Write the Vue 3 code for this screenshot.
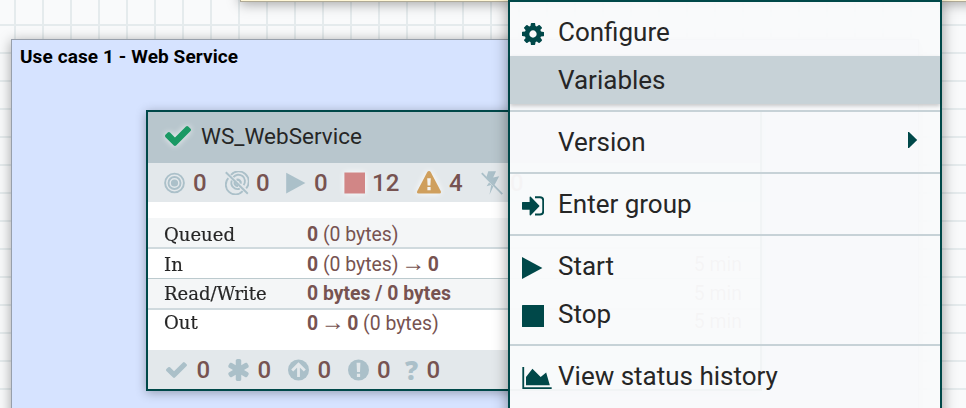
<script setup>
const activity = [
  { icon: 'transmitting', value: '0', width: 61 },
  { icon: 'muted', value: '0', width: 60 },
  { icon: 'running', value: '0', width: 59 },
  { icon: 'stopped', value: '12', width: 73 },
  { icon: 'invalid', value: '4', width: 64 },
  { icon: 'disabled', value: '0', width: 60 },
]

const stats = [
  { label: 'Queued', parts: [['0', true], [' (0 bytes)', false]], window: '' },
  { label: 'In', parts: [['0', true], [' (0 bytes)', false], ['→', false], ['0', true]], window: '5 min' },
  { label: 'Read/Write', parts: [['0 bytes / 0 bytes', true]], window: '5 min' },
  { label: 'Out', parts: [['0', true], ['→', false], ['0', true], [' (0 bytes)', false]], window: '5 min' },
]

const versions = [
  { icon: 'check', value: '0', width: 62 },
  { icon: 'asterisk', value: '0', width: 60 },
  { icon: 'up', value: '0', width: 59.5 },
  { icon: 'alert', value: '0', width: 57.5 },
  { icon: 'question', value: '0', width: 50 },
]

const menu = [
  [{ icon: 'cog', label: 'Configure' }, { label: 'Variables', active: true }],
  [{ label: 'Version', submenu: true }],
  [{ icon: 'enter', label: 'Enter group' }],
  [{ icon: 'start', label: 'Start' }, { icon: 'stop', label: 'Stop' }],
  [{ icon: 'chart', label: 'View status history' }],
]

const checkPath = 'M1671 566q0 40-28 68l-724 724-136 136q-28 28-68 28t-68-28l-136-136-362-362q-28-28-28-68t28-68l136-136q28-28 68-28t68 28l294 295 656-657q28-28 68-28t68 28l136 136q28 28 28 68z'
const asteriskPath = 'M1546 1050q46 26 59.5 77.5t-12.5 97.5l-64 110q-26 46-77.5 59.5t-97.5-12.5l-266-153v307q0 52-38 90t-90 38h-128q-52 0-90-38t-38-90v-307l-266 153q-46 26-97.5 12.5t-77.5-59.5l-64-110q-26-46-12.5-97.5t59.5-77.5l266-154-266-154q-46-26-59.5-77.5t12.5-97.5l64-110q26-46 77.5-59.5t97.5 12.5l266 153v-307q0-52 38-90t90-38h128q52 0 90 38t38 90v307l266-153q46-26 97.5-12.5t77.5 59.5l64 110q26 46 12.5 97.5t-59.5 77.5l-266 154z'
const cogPath = 'M1152 896q0-106-75-181t-181-75-181 75-75 181 75 181 181 75 181-75 75-181zm512-109v222q0 12-8 23t-20 13l-185 28q-19 54-39 91 35 50 107 138 10 12 10 25t-9 23q-27 37-99 108t-94 71q-12 0-26-9l-138-108q-44 23-91 38-16 136-29 186-7 28-36 28h-222q-14 0-24.5-8.5t-11.5-21.5l-28-184q-49-16-90-37l-141 107q-10 9-25 9-14 0-25-11-126-114-165-168-7-10-7-23 0-12 8-23 15-21 51-66.5t54-70.5q-27-50-41-99l-183-27q-13-2-21-12.5t-8-23.5v-222q0-12 8-23t19-13l186-28q14-46 39-92-40-57-107-138-10-12-10-24 0-10 9-23 26-36 98.5-107.5t94.5-71.5q13 0 26 10l138 107q44-23 91-38 16-136 29-186 7-28 36-28h222q14 0 24.5 8.5t11.5 21.5l28 184q49 16 90 37l142-107q9-9 24-9 13 0 25 10 129 119 165 170 7 8 7 22 0 12-8 23-15 21-51 66.5t-54 70.5q26 50 41 98l183 28q13 2 21 12.5t8 23.5z'
</script>

<template>
  <div class="canvas">
    <div class="note"></div>

    <section class="label">
      <h2>Use case 1 - Web Service</h2>
    </section>

    <article class="group">
      <header class="title">
        <svg class="ok" width="26" height="20" viewBox="121 334 1550 1188" preserveAspectRatio="none"><path :d="checkPath" /></svg>
        <span>WS_WebService</span>
      </header>

      <div class="bar">
        <div v-for="(a, i) in activity" :key="i" class="cell" :style="{ width: a.width + 'px' }">
          <svg v-if="a.icon === 'transmitting'" class="ico" width="22" height="24" viewBox="0 0 22 24">
            <g fill="none" stroke="#abc0c9" stroke-width="1.9">
              <circle cx="10.5" cy="12" r="9.4" /><circle cx="10.5" cy="12" r="6" />
            </g>
            <circle cx="10.5" cy="12" r="3.6" fill="#abc0c9" />
          </svg>
          <svg v-else-if="a.icon === 'muted'" class="ico" width="24" height="24" viewBox="0 0 24 24">
            <g fill="none" stroke="#abc0c9" stroke-width="1.9">
              <path d="M6 3.8A9.6 9.6 0 0 1 21.2 17.3M3.3 7.2A9.6 9.6 0 0 0 17.7 20.2" />
              <path d="M8.4 6.2A6.2 6.2 0 0 1 18.6 14.1M6.8 9.500A6.2 6.2 0 0 0 14.8 17.6" />
              <path d="M11.6 8.900A3.200 3.200 0 0 1 15.7 12.6M9.700 10.900A3.200 3.200 0 0 0 13 14.900" stroke-width="2.200" />
              <path d="M.8 1.3L22.8 22.8" />
            </g>
          </svg>
          <svg v-else-if="a.icon === 'running'" class="ico" width="22" height="24" viewBox="0 0 22 24"><path d="M1.2 1.7L20.400 12 1.2 22.5z" fill="#abc0c9" /></svg>
          <svg v-else-if="a.icon === 'stopped'" class="ico glow" width="21" height="24" viewBox="0 0 21 24"><path d="M.4 1.4h21v21.2h-21z" fill="#d18686" /></svg>
          <svg v-else-if="a.icon === 'invalid'" class="ico glow" width="25" height="24" viewBox="0 0 25 24">
            <path d="M12 0q1.1 0 1.7 1l10 19q.9 2.2-1.2 2.5H1.5Q-.7 22.2.3 20l10-19Q10.900 0 12 0z" fill="#cf9f5d" />
            <path d="M10.200 7.200h3.600l-.4 7.400h-2.800zM10.400 16h3.200v3.200h-3.200z" fill="#f4f4f2" />
          </svg>
          <svg v-else class="ico" width="22" height="24" viewBox="0 0 22 24">
            <path d="M7.300.3h7.700l-2.800 6.100 6-1.200-4.700 8.700-8.100-7.700zM8 11.500l4.300 4.100-3.800 8.200 1.700-9.700-4.600 1.100z" fill="#abc0c9" />
            <path d="M.8 2.200L21.300 23.100" stroke="#abc0c9" stroke-width="1.8" />
          </svg>
          <span>{{ a.value }}</span>
        </div>
      </div>

      <dl class="stats">
        <div v-for="s in stats" :key="s.label" class="row">
          <dt><span>{{ s.label }}</span></dt>
          <dd><template v-for="(p, i) in s.parts" :key="i"><span :class="{ strong: p[1], arrow: p[0] === '→' }">{{ p[0] }}</span></template></dd>
          <dd class="window">{{ s.window }}</dd>
        </div>
      </dl>

      <div class="bar foot">
        <div v-for="(v, i) in versions" :key="i" class="cell" :style="{ width: v.width + 'px' }">
          <svg v-if="v.icon === 'check'" class="ico" width="22" height="22" viewBox="0 0 22 22"><svg x="0" y="3" width="21" height="16" viewBox="121 334 1550 1188" preserveAspectRatio="none"><path :d="checkPath" fill="#abc0c9" /></svg></svg>
          <svg v-else-if="v.icon === 'asterisk'" class="ico" width="21" height="22" viewBox="172 128 1448 1536"><path :d="asteriskPath" fill="#abc0c9" /></svg>
          <svg v-else-if="v.icon === 'up'" class="ico" width="21" height="22" viewBox="0 0 21 22">
            <circle cx="10.500" cy="11" r="10.500" fill="#abc0c9" />
            <path d="M4.200 11.500L10.500 5.200 16.800 11.500M10.500 6v12" fill="none" stroke="#e3e8eb" stroke-width="2.800" />
          </svg>
          <svg v-else-if="v.icon === 'alert'" class="ico" width="21" height="22" viewBox="0 0 21 22">
            <circle cx="10.500" cy="11" r="10.500" fill="#abc0c9" />
            <path d="M8.600 3.800h3.800L12 13H9zM8.900 14.700h3.200v3.200H8.900z" fill="#e3e8eb" />
          </svg>
          <b v-else class="question">?</b>
          <span>{{ v.value }}</span>
        </div>
      </div>
    </article>

    <nav class="menu">
      <ul v-for="(section, n) in menu" :key="n">
        <li v-for="item in section" :key="item.label" :class="{ active: item.active }">
          <i class="slot">
            <svg v-if="item.icon === 'cog'" width="22" height="22" viewBox="128 128 1536 1536"><path :d="cogPath" /></svg>
            <svg v-else-if="item.icon === 'enter'" width="22" height="22" viewBox="0 0 22 22">
              <path d="M0 7.500q0-.6.600-.6H7.600V2.300q.2-1.300 1.200-.5L17.200 10.600q.5.500 0 1L8.800 20.200q-1 .8-1.200-.5V14.700H.600q-.6 0-.6-.6z" />
              <path d="M13 2.200h5q3.200 0 3.200 3.300v10.700q0 3.300-3.200 3.300H13" fill="none" stroke="#004849" stroke-width="1.900" />
            </svg>
            <svg v-else-if="item.icon === 'start'" width="22" height="22" viewBox="0 0 22 22"><path d="M0 0L20.400 11 0 22z" /></svg>
            <svg v-else-if="item.icon === 'stop'" width="22" height="22" viewBox="0 0 22 22"><rect width="22.200" height="22" rx=".6" /></svg>
            <svg v-else-if="item.icon === 'chart'" width="30" height="22" viewBox="0 128 2048 1536"><path d="M2048 1536v128h-2048v-1536h128v1408h1920zm-384-1024l256 896h-1664v-576l448-576 576 576z" /></svg>
          </i>
          <span>{{ item.label }}</span>
          <svg v-if="item.submenu" class="caret" width="10" height="16" viewBox="0 0 10 16"><path d="M0 0H1L9.200 8 1 16H0z" /></svg>
        </li>
      </ul>
    </nav>
  </div>
</template>

<style>
body {
  margin: 0;
}
</style>

<style scoped>
.canvas {
  position: relative;
  width: 966px;
  height: 408px;
  overflow: hidden;
  font-family: Roboto, "Liberation Sans", sans-serif;
  background-color: #f9fafb;
  background-image:
    linear-gradient(90deg, #e5ebed 2px, transparent 2px),
    linear-gradient(#e5ebed 2px, transparent 2px);
  background-size: 28px 28px;
  background-position: 14px 0, 0 24px;
}
.note {
  position: absolute;
  left: 240px;
  top: -60px;
  width: 800px;
  height: 60px;
  background: #fff7d7;
  border: 1px solid #b0aa96;
  box-shadow: 0 2px 12px rgba(0, 0, 0, 0.35);
}
.label {
  position: absolute;
  left: 11px;
  top: 39px;
  width: 908px;
  height: 420px;
  box-sizing: border-box;
  background: #d6e3ff;
  border: 1px solid #979fab;
  box-shadow: 0 2px 12px rgba(0, 0, 0, 0.35);
}
.label h2 {
  margin: 0;
  padding: 5px 8px;
  font-size: 19px;
  letter-spacing: 0.1px;
  line-height: 24px;
  font-weight: 700;
  color: #000;
}
.group {
  position: absolute;
  left: 146px;
  top: 110px;
  width: 616px;
  height: 281px;
  box-sizing: border-box;
  border: 2px solid #004849;
  background: #fff;
  box-shadow: 0 2px 10px rgba(0, 0, 0, 0.3);
}
.title {
  display: flex;
  align-items: center;
  height: 51px;
  padding: 0 0 3px 17px;
  box-sizing: border-box;
  background: #b8c6cd;
  font-size: 22.5px;
  color: #262626;
}
.title span {
  margin-left: 10px;
  line-height: 28px;
}
.ok {
  fill: #1a9964;
  filter: drop-shadow(0 0 3px rgba(255, 255, 255, 0.8));
}
.bar {
  display: flex;
  align-items: center;
  height: 39px;
  padding-left: 16px;
  background: #e3e8eb;
  color: #775351;
  font-size: 24px;
  font-weight: 500;
}
.foot {
  padding-left: 18px;
}
.cell {
  display: flex;
  flex: none;
  align-items: center;
  gap: 7px;
  white-space: nowrap;
}
.foot .cell {
  gap: 8.5px;
}
.ico {
  flex: none;
}
.glow {
  filter: drop-shadow(0 0 3px #fff);
}
.stats {
  margin: 0;
  padding: 16px 0;
  height: 116px;
}
.row {
  display: flex;
  height: 31px;
  box-sizing: border-box;
  padding-left: 16px;
  border-bottom: 2px solid #d0dade;
  line-height: 32px;
  font-size: 19.4px;
}
.row:nth-child(odd) {
  background: #f4f6f7;
}
.row:first-child dd {
  line-height: 34px;
}
.row:nth-child(2) {
  height: 30px;
  border-bottom: 1px solid #bccace;
  line-height: 31px;
}
.row:nth-child(3) {
  line-height: 29px;
}
.row:last-child {
  border-bottom: 0;
  line-height: 24px;
}
dt {
  width: 143px;
  font-family: "DejaVu Serif", serif;
  font-size: 19px;
  color: #262626;
  -webkit-text-stroke: 0.2px #262626;
}
dt span {
  display: inline-block;
  transform: scaleX(0.95);
  transform-origin: 0 0;
}
dd {
  margin: 0;
  color: #775351;
  font-weight: 400;
  white-space: pre;
}
.strong {
  font-weight: 700;
}
.arrow {
  margin: 0 2.5px;
  font-family: "Liberation Serif", serif;
  font-size: 24px;
  line-height: 1;
}
.window {
  margin-left: auto;
  padding-right: 18px;
}
.question {
  width: 13px;
  font-family: "Open Sans", sans-serif;
  font-weight: 800;
  font-size: 26px;
  line-height: 26px;
  color: #abc0c9;
}
.menu {
  position: absolute;
  left: 508px;
  top: 0;
  width: 434px;
  height: 460px;
  box-sizing: border-box;
  border: 2px solid #004849;
  background: rgba(249, 250, 251, 0.97);
  box-shadow: 0 0 14px rgba(0, 0, 0, 0.4);
}
ul {
  margin: 0;
  padding: 6px 0;
  list-style: none;
}
ul + ul {
  border-top: 2px solid #c7d2d7;
}
li {
  display: flex;
  align-items: center;
  height: 48px;
  padding: 0 22px 0 12px;
  font-size: 26px;
  color: #262626;
}
li.active {
  background: #c7d2d7;
  box-shadow: 0 2px 4px rgba(0, 0, 0, 0.2);
}
.slot {
  display: flex;
  width: 36px;
  padding-top: 3px;
  box-sizing: border-box;
}
.menu svg {
  flex: none;
  fill: #004849;
}
.caret {
  margin-left: auto;
  margin-top: -4px;
}
</style>
